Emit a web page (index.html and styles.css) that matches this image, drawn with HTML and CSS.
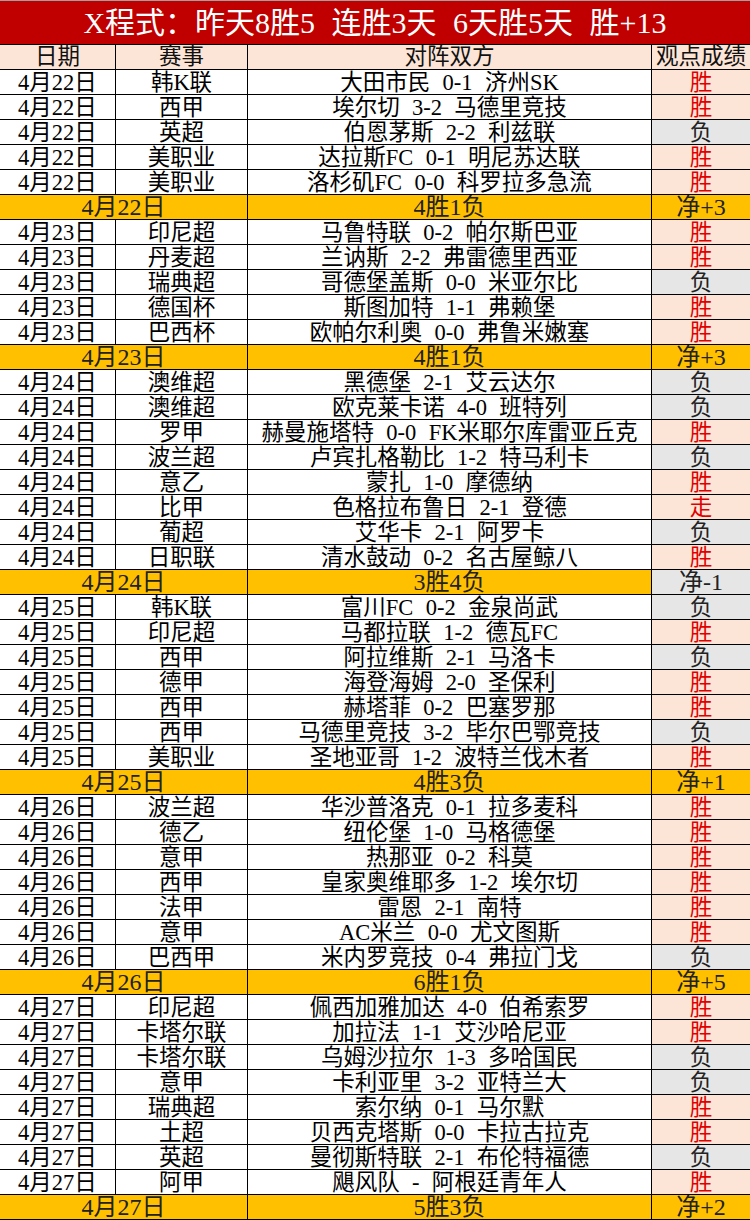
FILE: index.html
```html
<!DOCTYPE html>
<html lang="zh-CN">
<head>
<meta charset="utf-8">
<title>X程式</title>
<link rel="stylesheet" href="styles.css">
</head>
<body>
<div class="page">
  <div class="title">X程式：昨天8胜5 连胜3天 6天胜5天 胜+13</div>
  <div class="sheet">
    <div class="c hd">日期</div><div class="c hd">赛事</div><div class="c hd">对阵双方</div><div class="c hd last">观点成绩</div>

    <div class="c">4月22日</div><div class="c">韩K联</div><div class="c">大田市民 0-1 济州SK</div><div class="c last win">胜</div>
    <div class="c">4月22日</div><div class="c">西甲</div><div class="c">埃尔切 3-2 马德里竞技</div><div class="c last win">胜</div>
    <div class="c">4月22日</div><div class="c">英超</div><div class="c">伯恩茅斯 2-2 利兹联</div><div class="c last lose">负</div>
    <div class="c">4月22日</div><div class="c">美职业</div><div class="c">达拉斯FC 0-1 明尼苏达联</div><div class="c last win">胜</div>
    <div class="c">4月22日</div><div class="c">美职业</div><div class="c">洛杉矶FC 0-0 科罗拉多急流</div><div class="c last win">胜</div>
    <div class="c sum span2">4月22日</div><div class="c sum">4胜1负</div><div class="c sum last">净+3</div>

    <div class="c">4月23日</div><div class="c">印尼超</div><div class="c">马鲁特联 0-2 帕尔斯巴亚</div><div class="c last win">胜</div>
    <div class="c">4月23日</div><div class="c">丹麦超</div><div class="c">兰讷斯 2-2 弗雷德里西亚</div><div class="c last win">胜</div>
    <div class="c">4月23日</div><div class="c">瑞典超</div><div class="c">哥德堡盖斯 0-0 米亚尔比</div><div class="c last lose">负</div>
    <div class="c">4月23日</div><div class="c">德国杯</div><div class="c">斯图加特 1-1 弗赖堡</div><div class="c last win">胜</div>
    <div class="c">4月23日</div><div class="c">巴西杯</div><div class="c">欧帕尔利奥 0-0 弗鲁米嫩塞</div><div class="c last win">胜</div>
    <div class="c sum span2">4月23日</div><div class="c sum">4胜1负</div><div class="c sum last">净+3</div>

    <div class="c">4月24日</div><div class="c">澳维超</div><div class="c">黑德堡 2-1 艾云达尔</div><div class="c last lose">负</div>
    <div class="c">4月24日</div><div class="c">澳维超</div><div class="c">欧克莱卡诺 4-0 班特列</div><div class="c last lose">负</div>
    <div class="c">4月24日</div><div class="c">罗甲</div><div class="c">赫曼施塔特 0-0 FK米耶尔库雷亚丘克</div><div class="c last win">胜</div>
    <div class="c">4月24日</div><div class="c">波兰超</div><div class="c">卢宾扎格勒比 1-2 特马利卡</div><div class="c last lose">负</div>
    <div class="c">4月24日</div><div class="c">意乙</div><div class="c">蒙扎 1-0 摩德纳</div><div class="c last win">胜</div>
    <div class="c">4月24日</div><div class="c">比甲</div><div class="c">色格拉布鲁日 2-1 登德</div><div class="c last win">走</div>
    <div class="c">4月24日</div><div class="c">葡超</div><div class="c">艾华卡 2-1 阿罗卡</div><div class="c last lose">负</div>
    <div class="c">4月24日</div><div class="c">日职联</div><div class="c">清水鼓动 0-2 名古屋鲸八</div><div class="c last win">胜</div>
    <div class="c sum span2">4月24日</div><div class="c sum">3胜4负</div><div class="c sum last neg">净-1</div>

    <div class="c">4月25日</div><div class="c">韩K联</div><div class="c">富川FC 0-2 金泉尚武</div><div class="c last lose">负</div>
    <div class="c">4月25日</div><div class="c">印尼超</div><div class="c">马都拉联 1-2 德瓦FC</div><div class="c last win">胜</div>
    <div class="c">4月25日</div><div class="c">西甲</div><div class="c">阿拉维斯 2-1 马洛卡</div><div class="c last lose">负</div>
    <div class="c">4月25日</div><div class="c">德甲</div><div class="c">海登海姆 2-0 圣保利</div><div class="c last win">胜</div>
    <div class="c">4月25日</div><div class="c">西甲</div><div class="c">赫塔菲 0-2 巴塞罗那</div><div class="c last win">胜</div>
    <div class="c">4月25日</div><div class="c">西甲</div><div class="c">马德里竞技 3-2 毕尔巴鄂竞技</div><div class="c last lose">负</div>
    <div class="c">4月25日</div><div class="c">美职业</div><div class="c">圣地亚哥 1-2 波特兰伐木者</div><div class="c last win">胜</div>
    <div class="c sum span2">4月25日</div><div class="c sum">4胜3负</div><div class="c sum last">净+1</div>

    <div class="c">4月26日</div><div class="c">波兰超</div><div class="c">华沙普洛克 0-1 拉多麦科</div><div class="c last win">胜</div>
    <div class="c">4月26日</div><div class="c">德乙</div><div class="c">纽伦堡 1-0 马格德堡</div><div class="c last win">胜</div>
    <div class="c">4月26日</div><div class="c">意甲</div><div class="c">热那亚 0-2 科莫</div><div class="c last win">胜</div>
    <div class="c">4月26日</div><div class="c">西甲</div><div class="c">皇家奥维耶多 1-2 埃尔切</div><div class="c last win">胜</div>
    <div class="c">4月26日</div><div class="c">法甲</div><div class="c">雷恩 2-1 南特</div><div class="c last win">胜</div>
    <div class="c">4月26日</div><div class="c">意甲</div><div class="c">AC米兰 0-0 尤文图斯</div><div class="c last win">胜</div>
    <div class="c">4月26日</div><div class="c">巴西甲</div><div class="c">米内罗竞技 0-4 弗拉门戈</div><div class="c last lose">负</div>
    <div class="c sum span2">4月26日</div><div class="c sum">6胜1负</div><div class="c sum last">净+5</div>

    <div class="c">4月27日</div><div class="c">印尼超</div><div class="c">佩西加雅加达 4-0 伯希索罗</div><div class="c last win">胜</div>
    <div class="c">4月27日</div><div class="c">卡塔尔联</div><div class="c">加拉法 1-1 艾沙哈尼亚</div><div class="c last win">胜</div>
    <div class="c">4月27日</div><div class="c">卡塔尔联</div><div class="c">乌姆沙拉尔 1-3 多哈国民</div><div class="c last lose">负</div>
    <div class="c">4月27日</div><div class="c">意甲</div><div class="c">卡利亚里 3-2 亚特兰大</div><div class="c last lose">负</div>
    <div class="c">4月27日</div><div class="c">瑞典超</div><div class="c">索尔纳 0-1 马尔默</div><div class="c last win">胜</div>
    <div class="c">4月27日</div><div class="c">土超</div><div class="c">贝西克塔斯 0-0 卡拉古拉克</div><div class="c last win">胜</div>
    <div class="c">4月27日</div><div class="c">英超</div><div class="c">曼彻斯特联 2-1 布伦特福德</div><div class="c last lose">负</div>
    <div class="c">4月27日</div><div class="c">阿甲</div><div class="c">飓风队 - 阿根廷青年人</div><div class="c last win">胜</div>
    <div class="c sum span2">4月27日</div><div class="c sum">5胜3负</div><div class="c sum last">净+2</div>
  </div>
</div>
</body>
</html>
```

FILE: styles.css
```css
* { box-sizing: border-box; }
html, body { margin: 0; padding: 0; background: #ffffff; }
body {
  width: 750px;
  font-family: "Liberation Serif", "Noto Sans CJK SC", serif;
  color: #000;
}
.page { width: 750px; }
.title {
  height: 44px;
  background: #c00000;
  color: #ffffff;
  font-size: 30px;
  line-height: 44px;
  text-align: center;
  white-space: pre;
  word-spacing: 0.3em;
  border-top: 1px solid #a0a0a0;
}
.sheet {
  display: grid;
  grid-template-columns: 116px 132px 404px 98px;
}
.c {
  height: 25px;
  border-right: 1px solid #000;
  border-bottom: 1px solid #000;
  font-size: 22.5px;
  line-height: 25px;
  text-align: center;
  white-space: pre;
  word-spacing: 0.3em;
  overflow: hidden;
}
.c.last { border-right: none; }
.hd {
  height: 26px;
  border-top: 1px solid #000;
  background: #fce4d6;
  color: #111;
  line-height: 24px;
}
.win { background: #fce4d6; color: #e00000; }
.lose { background: #e7e6e6; color: #222; }
.sum {
  background: #ffc000;
  color: #222;
  font-size: 24px;
  line-height: 25px;
}
.sum.neg { background: #e7e6e6; }
.span2 { grid-column: span 2; }
```
